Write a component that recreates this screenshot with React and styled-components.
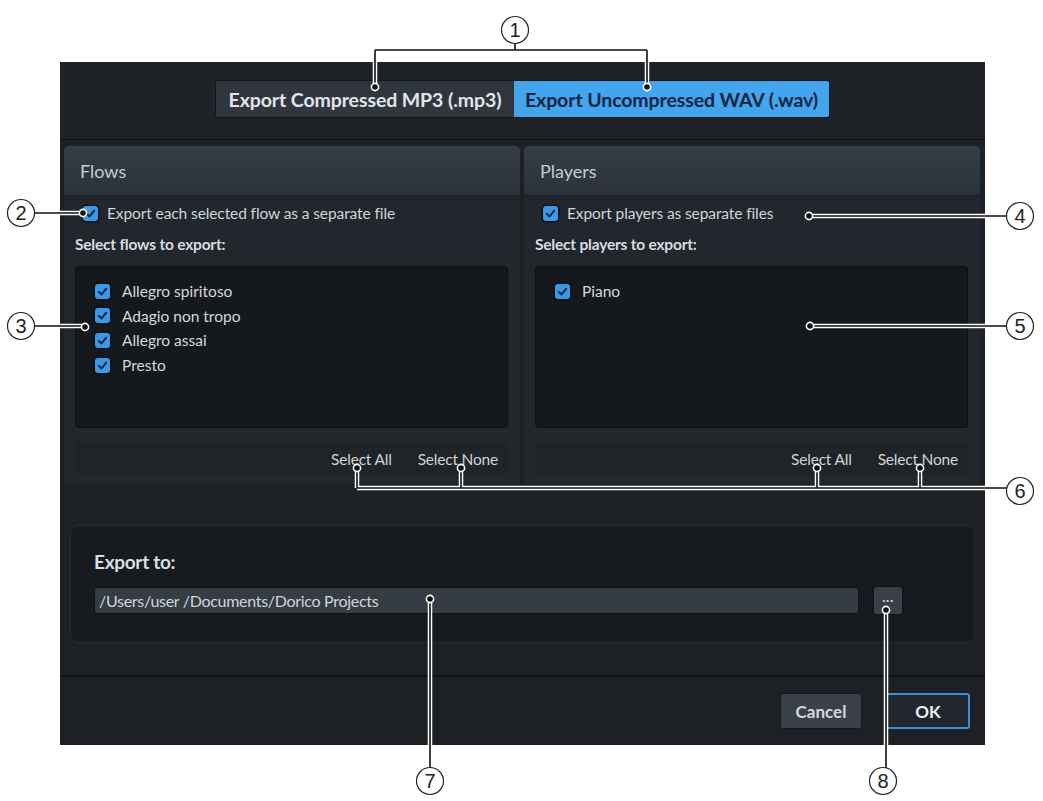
import React from "react";
import styled, { createGlobalStyle } from "styled-components";

const GlobalStyle = createGlobalStyle`
  html, body {
    margin: 0;
    padding: 0;
    background: #ffffff;
  }
  body {
    font-family: Lato, "Open Sans", "Noto Sans", sans-serif;
  }
  * {
    box-sizing: border-box;
  }
`;

const Page = styled.div`
  position: relative;
  width: 1043px;
  height: 801px;
  padding: 62px 0 0 60px;
  background: #ffffff;
  overflow: hidden;
`;

const Dialog = styled.div`
  width: 925px;
  height: 683px;
  display: flex;
  flex-direction: column;
  background: #1d2126;
`;

const TopBar = styled.div`
  height: 78px;
  display: flex;
  justify-content: center;
  align-items: flex-start;
  padding-top: 18px;
  border-bottom: 1px solid #0f1215;
  background: #1f2328;
`;

const Segmented = styled.div`
  display: flex;
  height: 38px;
  border: 1px solid #111417;
  border-radius: 3px;
  overflow: hidden;
`;

const Segment = styled.div`
  display: flex;
  align-items: center;
  justify-content: center;
  width: ${(p) => p.width}px;
  font-size: 19.5px;
  font-weight: 700;
  letter-spacing: -0.1px;
  color: ${(p) => (p.active ? "#0c2440" : "#e2e5e9")};
  background: ${(p) => (p.active ? "#44a5ef" : "#30363d")};
`;

const Panels = styled.div`
  display: flex;
  gap: 4px;
  height: 344px;
  padding: 6px 5px 0 4px;
`;

const PanelBox = styled.div`
  flex: 1;
  display: flex;
  flex-direction: column;
  background: #22272d;
  border-radius: 5px 5px 2px 2px;
`;

const PanelHeader = styled.div`
  height: 50px;
  display: flex;
  align-items: center;
  padding-left: 16px;
  font-size: 18px;
  color: #c6ccd2;
  border-radius: 5px 5px 0 0;
  background: linear-gradient(#343c45, #2c333b);
  border-bottom: 1px solid #1b1f24;
`;

const PanelBody = styled.div`
  display: flex;
  flex-direction: column;
  padding: 0 12px 9px 11px;
`;

const OptionRow = styled.div`
  height: 34px;
  display: flex;
  align-items: center;
  gap: 9px;
  padding-left: 8px;
  font-size: 15.5px;
  letter-spacing: -0.1px;
  color: #d0d5da;
`;

const SectionLabel = styled.div`
  height: 28px;
  display: flex;
  align-items: center;
  font-size: 15.5px;
  font-weight: 700;
  letter-spacing: -0.2px;
  color: #d8dce0;
`;

const List = styled.div`
  height: 162px;
  margin-top: 8px;
  padding: 12px 0 0 19px;
  background: #15191e;
  border: 1px solid #0c0f12;
  border-radius: 4px;
`;

const ListItem = styled.div`
  height: 24.6px;
  display: flex;
  align-items: center;
  gap: 12px;
  font-size: 15.5px;
  color: #d4d8dd;
`;

const ButtonBar = styled.div`
  height: 33px;
  margin-top: 14px;
  display: flex;
  justify-content: flex-end;
  align-items: center;
  gap: 26px;
  padding-right: 10px;
  background: #1f2429;
  border-radius: 2px;
  font-size: 15.5px;
  letter-spacing: -0.2px;
  color: #cfd3d8;
`;

const Box = styled.span`
  width: 15px;
  height: 15px;
  flex: none;
  display: flex;
  align-items: center;
  justify-content: center;
  border-radius: 3px;
  background: #3b98e4;
  box-shadow: 0 0 0 1.5px #0a121b;
`;

const ExportGroup = styled.div`
  height: 118px;
  margin: 41px 10px 0;
  padding: 25px 0 0 23px;
  background: #171b20;
  border: 1px solid #272c32;
  border-radius: 8px;
`;

const GroupLabel = styled.div`
  height: 20px;
  display: flex;
  align-items: center;
  font-size: 19px;
  font-weight: 700;
  letter-spacing: -0.3px;
  color: #dadee2;
`;

const PathRow = styled.div`
  display: flex;
  align-items: center;
  gap: 14px;
  margin-top: 15px;
`;

const PathField = styled.div`
  width: 765px;
  height: 27px;
  display: flex;
  align-items: center;
  padding-left: 4px;
  font-size: 16px;
  letter-spacing: -0.3px;
  color: #d0d5da;
  background: #363c44;
  border: 1px solid #101316;
  border-radius: 3px;
`;

const BrowseButton = styled.div`
  width: 30px;
  height: 29px;
  display: flex;
  align-items: center;
  justify-content: center;
  padding-bottom: 8px;
  font-size: 14px;
  font-weight: 700;
  letter-spacing: 0.5px;
  color: #d0d5da;
  background: #3a4049;
  border: 1px solid #101316;
  border-radius: 3px;
  line-height: 1;
`;

const Footer = styled.div`
  margin-top: auto;
  height: 70px;
  display: flex;
  justify-content: flex-end;
  align-items: center;
  gap: 24px;
  padding: 0 15px 0 0;
  border-top: 2px solid #111418;
  background: #1d2126;
`;

const FooterButton = styled.div`
  width: ${(p) => (p.primary ? 84 : 82)}px;
  height: 36px;
  display: flex;
  align-items: center;
  justify-content: center;
  font-size: 17px;
  font-weight: 700;
  color: ${(p) => (p.primary ? "#eef1f4" : "#d4d8dc")};
  background: ${(p) => (p.primary ? "#22272d" : "#3b414a")};
  border: ${(p) => (p.primary ? "2px solid #3d8fd6" : "1px solid #14171a")};
  border-radius: 3px;
`;

const Overlay = styled.svg`
  position: absolute;
  left: 0;
  top: 0;
  width: 1043px;
  height: 801px;
  pointer-events: none;
`;

function CheckBox() {
  return (
    <Box>
      <svg width="13" height="13" viewBox="0 0 16 16">
        <path
          d="M3.5 8.5 L6.8 11.6 L12.6 4.6"
          fill="none"
          stroke="#0c213b"
          strokeWidth="2.4"
          strokeLinecap="round"
          strokeLinejoin="round"
        />
      </svg>
    </Box>
  );
}

function Panel({ title, option, label, items }) {
  return (
    <PanelBox>
      <PanelHeader>{title}</PanelHeader>
      <PanelBody>
        <OptionRow>
          <CheckBox />
          {option}
        </OptionRow>
        <SectionLabel>{label}</SectionLabel>
        <List>
          {items.map((it) => (
            <ListItem key={it}>
              <CheckBox />
              {it}
            </ListItem>
          ))}
        </List>
        <ButtonBar>
          <span>Select All</span>
          <span>Select None</span>
        </ButtonBar>
      </PanelBody>
    </PanelBox>
  );
}

// leader lines: white halo under a black core
function Leader({ d }) {
  return (
    <g fill="none">
      <path d={d} stroke="#ffffff" strokeWidth="4.5" />
      <path d={d} stroke="#111111" strokeWidth="1.6" />
    </g>
  );
}

function Dot({ x, y }) {
  return <circle cx={x} cy={y} r="3.6" fill="#111111" stroke="#ffffff" strokeWidth="1.6" />;
}

function Badge({ x, y, n }) {
  return (
    <g>
      <circle cx={x} cy={y} r="13.5" fill="#ffffff" stroke="#222222" strokeWidth="1.2" />
      <text
        x={x}
        y={y + 7}
        textAnchor="middle"
        fontFamily="Liberation Sans, Arial, sans-serif"
        fontSize="20"
        fill="#222222"
      >
        {n}
      </text>
    </g>
  );
}

function Callouts() {
  return (
    <Overlay viewBox="0 0 1043 801">
      <Leader d="M515 43 V50 M375 50 H647 M375 50 V84 M647 50 V84" />
      <Dot x={375} y={87} />
      <Dot x={647} y={87} />
      <Badge x={515} y={30} n="1" />

      <Leader d="M34 213 H80" />
      <Dot x={83} y={213} />
      <Badge x={21} y={213} n="2" />

      <Leader d="M34 326 H82" />
      <Dot x={85} y={327} />
      <Badge x={21} y={326} n="3" />

      <Leader d="M1007 216 H812" />
      <Dot x={809} y={216} />
      <Badge x={1020} y={216} n="4" />

      <Leader d="M1007 326 H813" />
      <Dot x={810} y={326} />
      <Badge x={1020} y={326} n="5" />

      <Leader d="M1007 488 H357 M357 488 V471 M461 488 V471 M817 488 V471 M920 488 V471" />
      <Dot x={357} y={468} />
      <Dot x={461} y={468} />
      <Dot x={817} y={468} />
      <Dot x={920} y={468} />
      <Badge x={1020} y={491} n="6" />

      <Leader d="M430 768 V602" />
      <Dot x={430} y={599} />
      <Badge x={430} y={781} n="7" />

      <Leader d="M886 768 V613" />
      <Dot x={886} y={610} />
      <Badge x={883} y={781} n="8" />
    </Overlay>
  );
}

export default function App() {
  return (
    <>
      <GlobalStyle />
      <Page>
        <Dialog>
          <TopBar>
            <Segmented>
              <Segment width={298}>Export Compressed MP3 (.mp3)</Segment>
              <Segment width={315} active>
                Export Uncompressed WAV (.wav)
              </Segment>
            </Segmented>
          </TopBar>
          <Panels>
            <Panel
              title="Flows"
              option="Export each selected flow as a separate file"
              label="Select flows to export:"
              items={["Allegro spiritoso", "Adagio non tropo", "Allegro assai", "Presto"]}
            />
            <Panel
              title="Players"
              option="Export players as separate files"
              label="Select players to export:"
              items={["Piano"]}
            />
          </Panels>
          <ExportGroup>
            <GroupLabel>Export to:</GroupLabel>
            <PathRow>
              <PathField>/Users/user /Documents/Dorico Projects</PathField>
              <BrowseButton>...</BrowseButton>
            </PathRow>
          </ExportGroup>
          <Footer>
            <FooterButton>Cancel</FooterButton>
            <FooterButton primary>OK</FooterButton>
          </Footer>
        </Dialog>
        <Callouts />
      </Page>
    </>
  );
}
